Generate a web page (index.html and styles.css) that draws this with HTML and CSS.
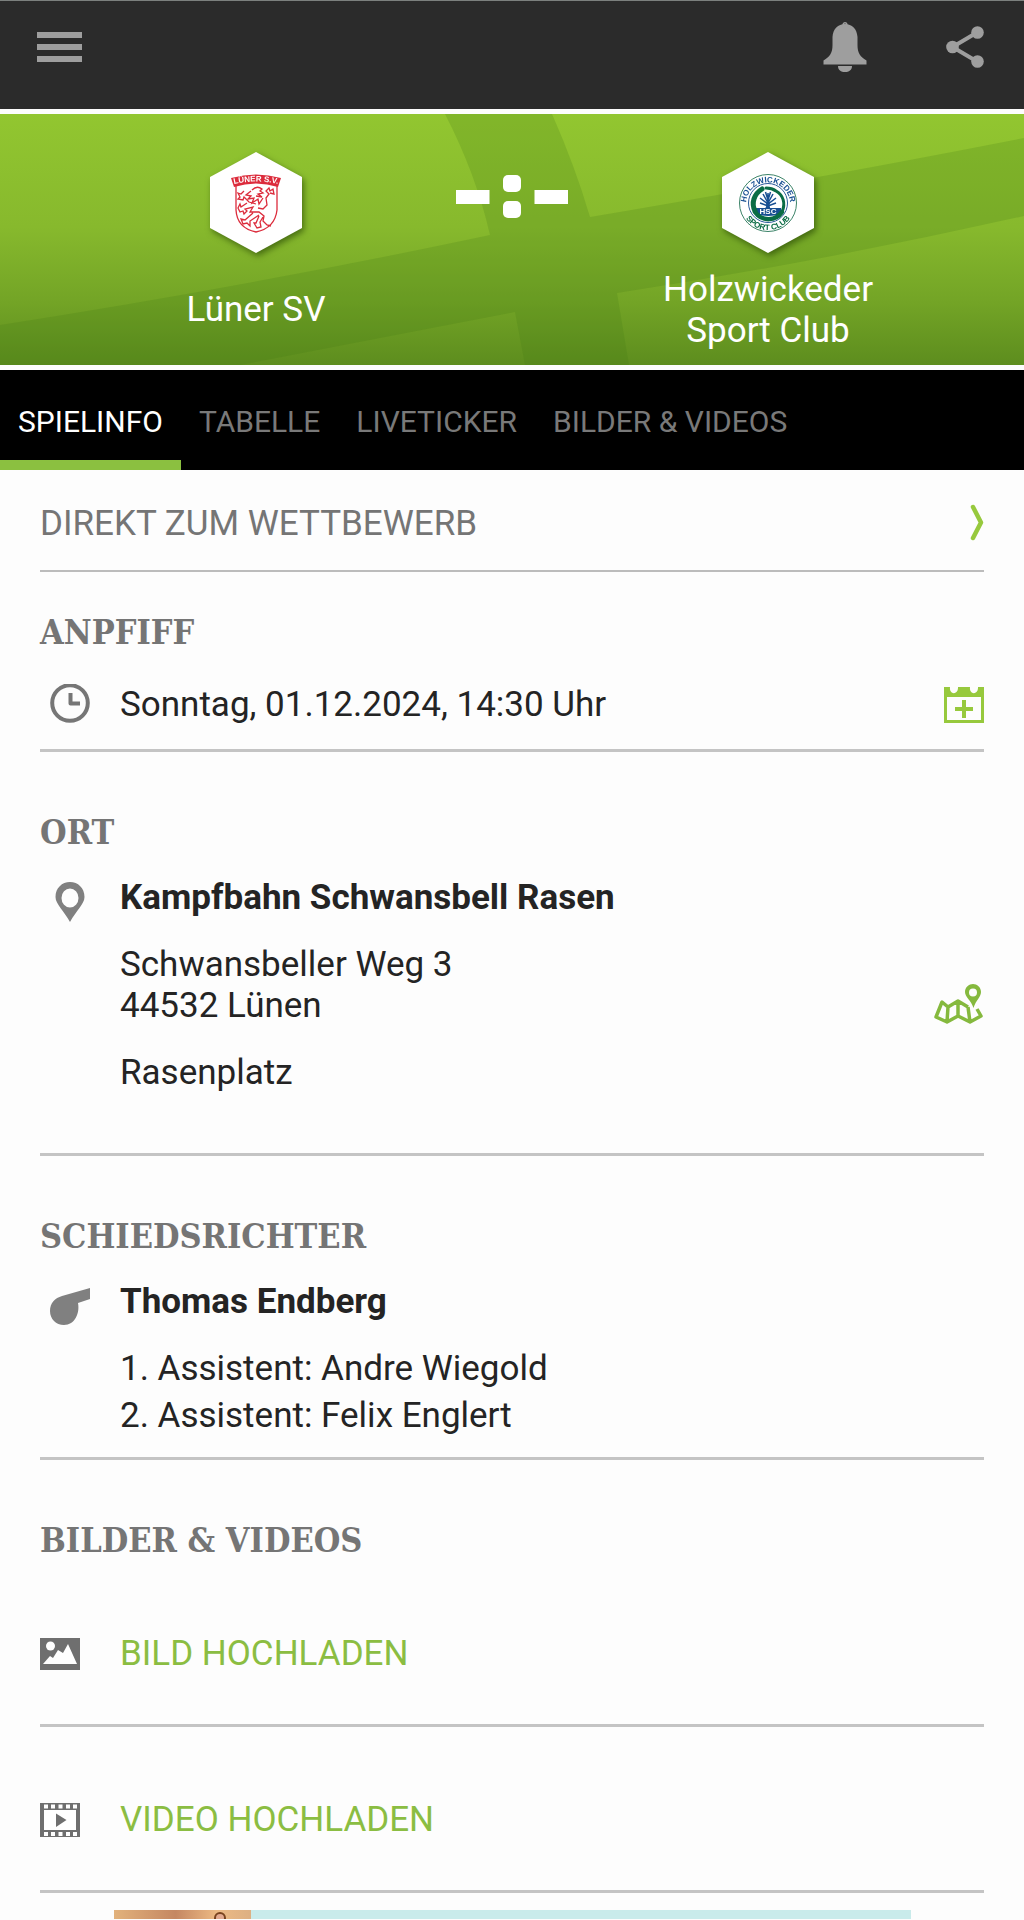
FILE: index.html
```html
<!DOCTYPE html>
<html lang="de">
<head>
<meta charset="utf-8">
<meta name="viewport" content="width=device-width, initial-scale=1">
<title>Lüner SV – Holzwickeder Sport Club</title>
<link rel="stylesheet" href="styles.css">
</head>
<body>
<header class="topbar">
  <button class="icon-button" type="button" aria-label="Menü">
    <svg width="45" height="30" viewBox="0 0 45 30" fill="#9e9e9e"><path d="M0 0h45v6H0zM0 12h45v6H0zM0 24h45v6H0z"/></svg>
  </button>
  <div class="topbar-actions">
    <button class="icon-button" type="button" aria-label="Benachrichtigungen">
      <svg width="44" height="50" viewBox="0 0 44 50" fill="#9e9e9e"><path d="M22 2C29 2 34 7 34.500 15V23C34.500 31 37 34.500 43.500 38.500V42.500H.5V38.500C7 34.500 9.500 31 9.500 23V15C10 7 15 2 22 2ZM15 44H29C29 48 26 50 22 50S15 48 15 44Z"/><circle cx="22" cy="2.600" r="1.800" fill="none" stroke="#9e9e9e" stroke-width="1.400"/></svg>
    </button>
    <button class="icon-button" type="button" aria-label="Teilen">
      <svg width="38" height="42" viewBox="0 0 38 42" fill="#9e9e9e"><path d="M31 6.500 6.500 21 31 35.500" fill="none" stroke="#9e9e9e" stroke-width="4"/><circle cx="31.500" cy="6.500" r="6.300"/><circle cx="6.500" cy="21" r="6.300"/><circle cx="31.500" cy="35.500" r="6.300"/></svg>
    </button>
  </div>
</header>

<section class="match">
  <svg class="match-pattern" viewBox="0 0 1024 251" preserveAspectRatio="none" aria-hidden="true"><path fill="#3f7a14" fill-opacity=".2" d="M445 0H552Q575 52 590 103 820 64 1024 24V102Q820 148 617 179L629 251H525L515 198Q390 222 240 251H0V211Q250 172 490 121 476 60 445 0Z"/></svg>
  <div class="team team-home">
    <svg class="crest" width="104" height="114" viewBox="-6 -4 104 114" role="img" aria-label="Wappen Lüner SV">
      <path fill="#fff" d="M46 0 92 25V76L46 101 0 76V25Z"/>
      <g fill="none" stroke="#dc2c3c" stroke-width="1.300">
        <path d="M26 32V58Q27 76 46 80 65 76 67 58V32"/>
        <path d="M42 38q5-5 10-1l-2 2 3 2-5 1 4 3-6-1M41 39l-5 4 5 1-3 3 6-1-2 5 6-4 1 5 4-6M34 39l-3 3-3-1 2 4-2 2 5 1 1-3 5 5 7 2M60 41l4 1-1-5-3 2-1-3-3 3 3 3-3 4 1 7-4 4-5-1M37 51l-6 4-1-3-2 4 2 4 3-1 1 3 3-3-2-2 8-2-3 5 9 0 5 4-1 5 4 4 4 1M43 61l-8 7-4-1 2 5 4-1 3 3 0-5 9-6M49 64l-3 7-2 0 3 5 4-1-1-5 3-5"/>
      </g>
      <path fill="#dc2c3c" d="M21 26Q46 19 71 26L68 35Q46 28 24 35Z"/>
      <path id="crest-arc-home" fill="none" d="M20 33Q46 26 72 33"/>
      <text class="crest-name-home"><textPath href="#crest-arc-home" startOffset="50%">LÜNER S.V.</textPath></text>
    </svg>
    <p class="team-name">Lüner SV</p>
  </div>
  <div class="score" role="img" aria-label="Noch kein Ergebnis">
    <svg width="112" height="44" viewBox="0 0 112 44" fill="#fff"><path d="M0 15h33.500v14H0zM78.500 15H112v14H78.500z"/><rect x="47" y="0" width="18" height="17" rx="5"/><rect x="47" y="26" width="18" height="17" rx="5"/></svg>
  </div>
  <div class="team team-away">
    <svg class="crest" width="104" height="114" viewBox="-6 -4 104 114" role="img" aria-label="Wappen Holzwickeder Sport Club">
      <path fill="#fff" d="M46 0 92 25V76L46 101 0 76V25Z"/>
      <circle cx="46" cy="51" r="28.500" fill="#fff" stroke="#267557" stroke-width=".9"/>
      <circle cx="46" cy="51" r="19.500" fill="#fff" stroke="#2b5b99" stroke-width="1"/>
      <path id="crest-arc-top" fill="none" d="M24.500 57A22 22 0 1 1 67.500 57"/>
      <path id="crest-arc-bottom" fill="none" d="M19 51A27 27 0 0 0 73 51"/>
      <text class="crest-name-top"><textPath href="#crest-arc-top" startOffset="50%">HOLZWICKEDER</textPath></text>
      <text class="crest-name-bottom"><textPath href="#crest-arc-bottom" startOffset="50%">SPORT CLUB</textPath></text>
      <path stroke="#174f92" stroke-width="1.500" fill="none" d="M46 41V57M41 42l5 9 5-9M38 46l8 6 8-6M38 51l8 3 8-3M43.500 40l2.500 8 2.500-8"/>
      <path fill="#174f92" d="M43 57q2-3 1-6h4q-1 4 1 6ZM33 56H59V62Q46 66 34 62Z"/>
      <path fill="none" stroke="#0a6c45" stroke-width="5" stroke-linecap="round" d="M40 37C32 42 29 51 33 59"/>
      <path fill="none" stroke="#0a6c45" stroke-width="4.500" stroke-linecap="round" d="M33 60C40 70 54 69 60 60"/>
      <path fill="none" stroke="#0a6c45" stroke-width="3" stroke-linecap="round" d="M60 60C64 51 61 43 54 39Q50 36 44 36"/>
      <text class="crest-short" x="46" y="62">HSC</text>
    </svg>
    <p class="team-name">Holzwickeder<br>Sport Club</p>
  </div>
</section>

<nav class="tabs" aria-label="Spielbereiche">
  <a class="tab tab-active" href="#spielinfo" aria-current="page">SPIELINFO</a>
  <a class="tab" href="#tabelle">TABELLE</a>
  <a class="tab" href="#liveticker">LIVETICKER</a>
  <a class="tab" href="#bilder">BILDER &amp; VIDEOS</a>
</nav>

<main class="content" id="spielinfo">
  <a class="competition" href="#wettbewerb">
    <span>DIREKT ZUM WETTBEWERB</span>
    <svg width="14" height="40" viewBox="0 0 14 40" fill="none" stroke="#97c93d" stroke-width="4.500" stroke-linecap="round" stroke-linejoin="round"><path d="M3 3 11 18.500 3 34"/></svg>
  </a>

  <section class="block block-kickoff">
    <h2 class="heading">ANPFIFF</h2>
    <div class="row row-kickoff">
      <svg class="row-icon" width="40" height="41" viewBox="0 0 40 41" fill="none" stroke="#767676"><circle cx="20" cy="19" r="17.800" stroke-width="4"/><path d="M20.500 9V19.500H30" stroke-width="4" stroke-linejoin="round"/></svg>
      <p class="row-body">Sonntag, 01.12.2024, 14:30 Uhr</p>
      <button class="icon-button" type="button" aria-label="Zum Kalender hinzufügen">
        <svg width="40" height="36" viewBox="0 0 40 36" fill="#97c93d"><path fill-rule="evenodd" d="M0 0H6C5 8 14 8 14 1V0H26C25 8 34 8 34 1V0H40V36H0ZM3 10V33H37V10Z"/><path d="M18 13h4v7h7v4h-7v7h-4v-7h-7v-4h7z"/></svg>
      </button>
    </div>
  </section>

  <section class="block block-venue">
    <h2 class="heading">ORT</h2>
    <div class="row">
      <svg class="row-icon" width="40" height="50" viewBox="0 0 40 50" fill="#808080"><path fill-rule="evenodd" d="M20 5C28 5 34.500 11 34.500 20 34.500 27 26 34 20 45 14 34 5.500 27 5.500 20 5.500 11 12 5 20 5ZM20 11.500A8.500 9.500 0 1 0 20 30.500 8.500 9.500 0 1 0 20 11.500Z"/></svg>
      <div class="row-body stack">
        <p class="strong">Kampfbahn Schwansbell Rasen</p>
        <div class="address">
          <p>Schwansbeller Weg 3<br>44532 Lünen</p>
          <button class="icon-button" type="button" aria-label="Karte öffnen">
            <svg width="50" height="42" viewBox="0 0 50 42" fill="none" stroke="#85b93e" stroke-width="3.500" stroke-linejoin="round"><path d="M34 23 24 17 14 23 8 18 2 33 13 38 24 32 36 38 47 32 43 25M14 23 13 38M24 18V33M34 23 36 38"/><path fill="#85b93e" fill-rule="evenodd" stroke="none" d="M39 0C43 0 47 3 47 8 47 13 42 16 39.500 24 37 16 31 13 31 8 31 3 35 0 39 0ZM39 4.500A4 4 0 1 0 39 12.500 4 4 0 1 0 39 4.500Z"/></svg>
          </button>
        </div>
        <p>Rasenplatz</p>
      </div>
    </div>
  </section>

  <section class="block block-referee">
    <h2 class="heading">SCHIEDSRICHTER</h2>
    <div class="row">
      <svg class="row-icon" width="40" height="50" viewBox="0 0 40 50" fill="#808080"><path d="M40 7V18L28 22C30 32 25 44 14 44 6 44 0 38 0 30 0 22 5 17 12 15Z"/></svg>
      <div class="row-body stack stack-referee">
        <p class="strong">Thomas Endberg</p>
        <p class="assistants">1. Assistent: Andre Wiegold<br>2. Assistent: Felix Englert</p>
      </div>
    </div>
  </section>

  <section id="bilder">
    <h2 class="heading heading-media">BILDER &amp; VIDEOS</h2>
    <a class="upload" href="#bild-hochladen">
      <svg width="40" height="32" viewBox="0 0 40 32"><path fill="#6f6f6f" d="M0 0h40v32H0z"/><circle cx="10.500" cy="8" r="4.500" fill="#fff"/><path fill="#fff" d="M3 26 10 18 13 20 18 12 23 15 28 6 37 26Z"/></svg>
      <span>BILD HOCHLADEN</span>
    </a>
    <a class="upload" href="#video-hochladen">
      <svg width="40" height="34" viewBox="0 0 40 34"><path fill="#6f6f6f" d="M0 0h40v34H0z"/><path fill="#fff" d="M4 7h32v20H4zM4 1.500h4v4H4zM11 1.500h4v4h-4zM18.500 1.500h4v4h-4zM26 1.500h4v4h-4zM33 1.500h4v4h-4zM4 29h4v4H4zM11 29h4v4h-4zM18.500 29h4v4h-4zM26 29h4v4h-4zM33 29h4v4h-4z"/><path fill="#6f6f6f" d="M16 10.500 26.500 17 16 24Z"/></svg>
      <span>VIDEO HOCHLADEN</span>
    </a>
  </section>
</main>

<aside class="banner" aria-label="Anzeige">
  <div class="banner-photo">
    <svg width="14" height="9" viewBox="0 0 14 9"><circle cx="7" cy="8" r="5" fill="#e3aa90" stroke="#79431f" stroke-width="2"/></svg>
  </div>
</aside>
</body>
</html>
```
FILE: styles.css
```css
* {
  box-sizing: border-box;
}

body {
  margin: 0;
  background: #fdfdfd;
  color: #242424;
  font: 35px/41px Roboto, "Liberation Sans", sans-serif;
}

p,
h2 {
  margin: 0;
}

svg {
  display: block;
  flex: none;
}

a {
  color: inherit;
  text-decoration: none;
}

.icon-button {
  padding: 0;
  border: 0;
  background: none;
  cursor: pointer;
}

.topbar {
  display: flex;
  justify-content: space-between;
  height: 109px;
  padding: 21px 40px 0 37px;
  border-top: 1px solid #7c807e;
  background: #2b2b2b;
}

.topbar .icon-button {
  display: flex;
  align-items: center;
  height: 50px;
}

.topbar-actions {
  display: flex;
  gap: 79px;
}

.match {
  position: relative;
  display: grid;
  grid-template-columns: 1fr 112px 1fr;
  min-height: 251px;
  margin: 5px 0;
  background: linear-gradient(#92c630, #87b92d 45%, #73a426 75%, #5d8d1e);
  color: #fff;
}

.match-pattern {
  position: absolute;
  inset: 0;
  width: 100%;
  height: 100%;
}

.team {
  position: relative;
  display: flex;
  flex-direction: column;
  align-items: center;
  padding: 34px 0 8px;
}

.team-home {
  padding-left: 56px;
}

.team-away {
  padding-right: 56px;
}

.crest {
  filter: drop-shadow(2px 3px 3px rgb(30 60 0 / 60%));
}

.team-name {
  display: flex;
  flex: 1;
  align-items: center;
  text-align: center;
  white-space: nowrap;
}

.crest text {
  font-family: "Liberation Sans", Arial, sans-serif;
  font-weight: 700;
  text-anchor: middle;
}

.crest .crest-name-home {
  fill: #fff;
  font-size: 8px;
}

.crest .crest-name-top {
  fill: #174f92;
  font-size: 8px;
}

.crest .crest-name-bottom {
  fill: #0a6c45;
  font-size: 8px;
}

.crest .crest-short {
  fill: #fff;
  font-size: 8px;
}

.score {
  position: relative;
  padding-top: 61px;
}

.tabs {
  display: flex;
  height: 100px;
  background: #000;
  color: #797979;
  font-size: 30px;
}

.tab {
  padding: 31px 18px 0;
  border-bottom: 10px solid transparent;
  white-space: nowrap;
}

.tab-active {
  border-color: #8bc040;
  color: #fff;
}

.content {
  padding: 0 40px;
}

.competition {
  display: flex;
  align-items: center;
  justify-content: space-between;
  padding: 33px 0 26px;
  border-bottom: 2px solid #bcbcbc;
  color: #757575;
}

.block {
  padding: 60px 0;
  border-bottom: 3px solid #c4c4c4;
}

.block-kickoff {
  padding: 40px 0 24px;
}

.block-referee {
  padding-bottom: 18px;
}

.heading {
  margin-bottom: 24px;
  color: #757575;
  font-family: "DejaVu Serif Condensed", "DejaVu Serif", serif;
  font-size: 34px;
  font-weight: 700;
}

.row {
  display: flex;
  align-items: flex-start;
  padding-left: 10px;
}

.row-kickoff {
  align-items: center;
  margin-top: 31px;
}

.row-icon {
  margin-right: 30px;
}

.row-body {
  flex: 1;
}

.stack {
  display: grid;
  gap: 26px;
}

.stack-referee {
  gap: 23px;
}

.strong {
  font-weight: 700;
}

.address {
  display: flex;
  align-items: flex-end;
  justify-content: space-between;
}

.assistants {
  line-height: 47px;
}

.heading-media {
  margin: 60px 0 0;
}

.upload {
  display: flex;
  align-items: center;
  gap: 40px;
  padding: 72px 0 50px;
  border-bottom: 3px solid #c4c4c4;
  color: #8bbd42;
}

.banner {
  height: 9px;
  margin: 17px 113px 0 114px;
  background: #c9ebeb;
}

.banner-photo {
  display: flex;
  justify-content: flex-end;
  width: 137px;
  height: 9px;
  padding-right: 24px;
  background: linear-gradient(90deg, #e2b27c, #c58762 45%, #edba84 75%, #ddb083);
}
```
